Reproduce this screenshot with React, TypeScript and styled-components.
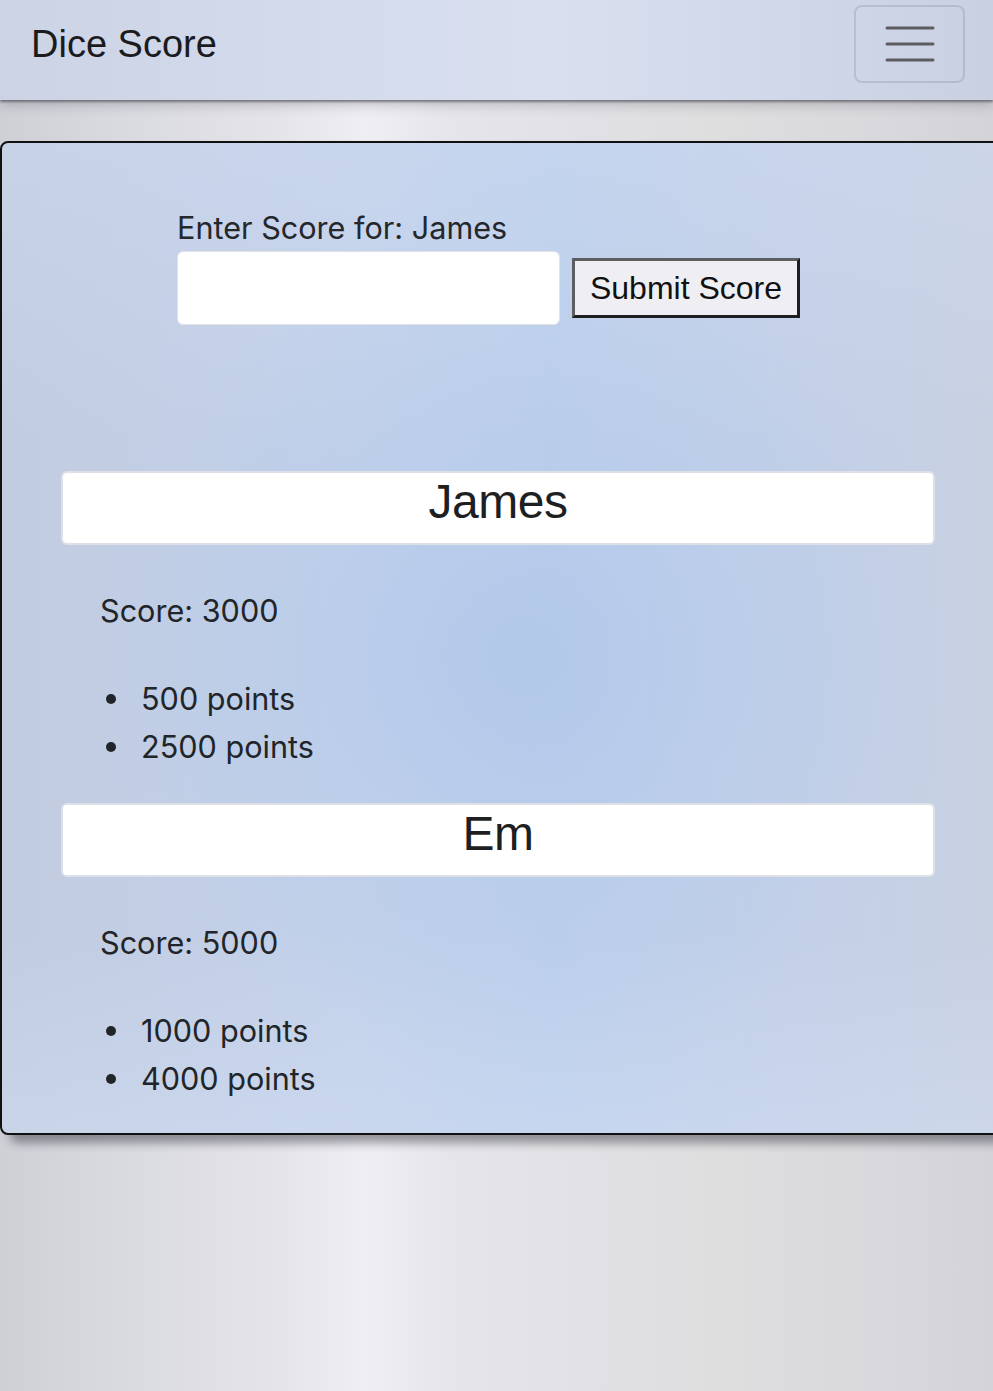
import React, { useState } from "react";
import styled, { createGlobalStyle } from "styled-components";

const GlobalStyle = createGlobalStyle`
	html, body {
		margin: 0;
		padding: 0;
		min-height: 100%;
	}
	body {
		min-height: 1391px;
		overflow-x: hidden;
		font-family: Inter, "Noto Sans", sans-serif;
		color: #212529;
		background:
			linear-gradient(90deg,
				#cfd0d6 0%,
				#d9dadf 12%,
				#e4e4e9 28%,
				#efeff3 37%,
				#e6e6ea 45%,
				#e1e1e5 60%,
				#dededf 72%,
				#d9d9dd 88%,
				#d3d3d8 100%);
	}
`;

const Navbar = styled.header`
	position: relative;
	z-index: 2;
	height: 100px;
	box-sizing: border-box;
	padding: 0 28px 0 31px;
	display: flex;
	align-items: flex-start;
	justify-content: space-between;
	background: linear-gradient(90deg, #cbd3e5 0%, #d3daeb 30%, #d9dfef 55%, #d0d7e8 80%, #c8d0e2 100%);
	box-shadow: 0 2px 2px rgba(60, 60, 70, 0.55), 0 6px 10px rgba(80, 80, 90, 0.25);
`;

const Brand = styled.h1`
	margin: 22px 0 0;
	font-family: "Liberation Sans", Arial, sans-serif;
	font-weight: 400;
	font-size: 38px;
	line-height: 44px;
	color: #1b1b1d;
`;

const Toggler = styled.button`
	width: 111px;
	height: 78px;
	margin-top: 5px;
	padding: 0;
	display: flex;
	align-items: center;
	justify-content: center;
	background: transparent;
	border: 2px solid rgba(0, 0, 0, 0.1);
	border-radius: 8px;
	cursor: pointer;
`;

const Card = styled.main`
	box-sizing: border-box;
	width: calc(100% + 10px);
	margin-top: 41px;
	padding: 0 0 30px 59px;
	border: 2px solid #111;
	border-radius: 8px;
	background:
		radial-gradient(ellipse 45% 40% at 52% 52%, rgba(178, 200, 234, 0.9) 0%, rgba(182, 203, 234, 0.5) 50%, rgba(190, 206, 232, 0) 100%),
		linear-gradient(180deg, rgba(210, 222, 242, 0.35) 0%, rgba(210, 222, 242, 0) 30%, rgba(210, 222, 242, 0) 80%, rgba(212, 224, 244, 0.4) 100%),
		linear-gradient(90deg, #c2cce0 0%, #c3d1ea 35%, #bccfec 55%, #c5d0e6 85%, #c8d1e2 100%);
	box-shadow: 10px 8px 10px rgba(40, 40, 50, 0.45);
`;

const ScoreForm = styled.form`
	padding: 67px 0 0 116px;
	margin-bottom: 146px;
`;

const FormLabel = styled.label`
	display: block;
	font-size: 30.6px;
	line-height: 36px;
	color: #24272b;
	margin-bottom: 5px;
`;

const FormRow = styled.div`
	display: flex;
	align-items: center;
	gap: 12px;
`;

const ScoreInput = styled.input`
	box-sizing: border-box;
	width: 383px;
	height: 74px;
	padding: 0 16px;
	font-size: 30px;
	background: #fff;
	border: 1px solid #dfe2e7;
	border-radius: 6px;
	outline: none;
`;

const SubmitButton = styled.button`
	box-sizing: border-box;
	width: 228px;
	height: 60px;
	padding: 0;
	font-family: "Liberation Sans", Arial, sans-serif;
	font-size: 32px;
	color: #111;
	background: #eeeef3;
	border: 3px solid;
	border-color: #5e5e62 #1e1e20 #1e1e20 #5e5e62;
	cursor: pointer;
`;

const PlayerBlock = styled.section`
	width: 874px;
`;

const PlayerName = styled.h2`
	box-sizing: border-box;
	height: 74px;
	margin: 0;
	display: flex;
	align-items: center;
	justify-content: center;
	padding-bottom: 14px;
	font-family: "Liberation Sans", Arial, sans-serif;
	font-weight: 400;
	font-size: 48px;
	letter-spacing: -0.5px;
	color: #1d1f22;
	background: #fff;
	border: 2px solid #dde1e7;
	border-radius: 6px;
`;

const ScoreLine = styled.p`
	margin: 48px 0 0 39px;
	font-size: 30.6px;
	line-height: 36px;
`;

const PointsList = styled.ul<{ $last?: boolean }>`
	margin: 46px 0 ${(p) => (p.$last ? "0" : "32px")} 0;
	padding-left: 45px;
	list-style: none;
`;

const PointsItem = styled.li`
	display: flex;
	align-items: center;
	font-size: 30.6px;
	line-height: 48px;

	&::before {
		content: "";
		flex: none;
		width: 10px;
		height: 10px;
		margin-right: 25px;
		border-radius: 50%;
		background: #212529;
	}
`;

type Player = { name: string; rolls: number[] };

const players: Player[] = [
	{ name: "James", rolls: [500, 2500] },
	{ name: "Em", rolls: [1000, 4000] },
];

const App = () => {
	const [score, setScore] = useState("");

	return (
		<>
			<GlobalStyle />
			<Navbar>
				<Brand>Dice Score</Brand>
				<Toggler aria-label="Toggle navigation">
					<svg width="52" height="38" viewBox="0 0 52 38">
						<g stroke="#5c5c60" strokeWidth="3" strokeLinecap="round">
							<line x1="3" y1="3" x2="49" y2="3" />
							<line x1="3" y1="19" x2="49" y2="19" />
							<line x1="3" y1="35" x2="49" y2="35" />
						</g>
					</svg>
				</Toggler>
			</Navbar>
			<Card>
				<ScoreForm onSubmit={(e) => e.preventDefault()}>
					<FormLabel htmlFor="score">Enter Score for: James</FormLabel>
					<FormRow>
						<ScoreInput
							id="score"
							value={score}
							onChange={(e) => setScore(e.target.value)}
						/>
						<SubmitButton type="submit">Submit Score</SubmitButton>
					</FormRow>
				</ScoreForm>
				{players.map((player, index) => {
					const total = player.rolls.reduce((a, b) => a + b, 0);
					return (
						<PlayerBlock key={player.name}>
							<PlayerName>{player.name}</PlayerName>
							<ScoreLine>Score: {total}</ScoreLine>
							<PointsList $last={index === players.length - 1}>
								{player.rolls.map((roll, i) => (
									<PointsItem key={i}>{roll} points</PointsItem>
								))}
							</PointsList>
						</PlayerBlock>
					);
				})}
			</Card>
		</>
	);
};

export default App;
